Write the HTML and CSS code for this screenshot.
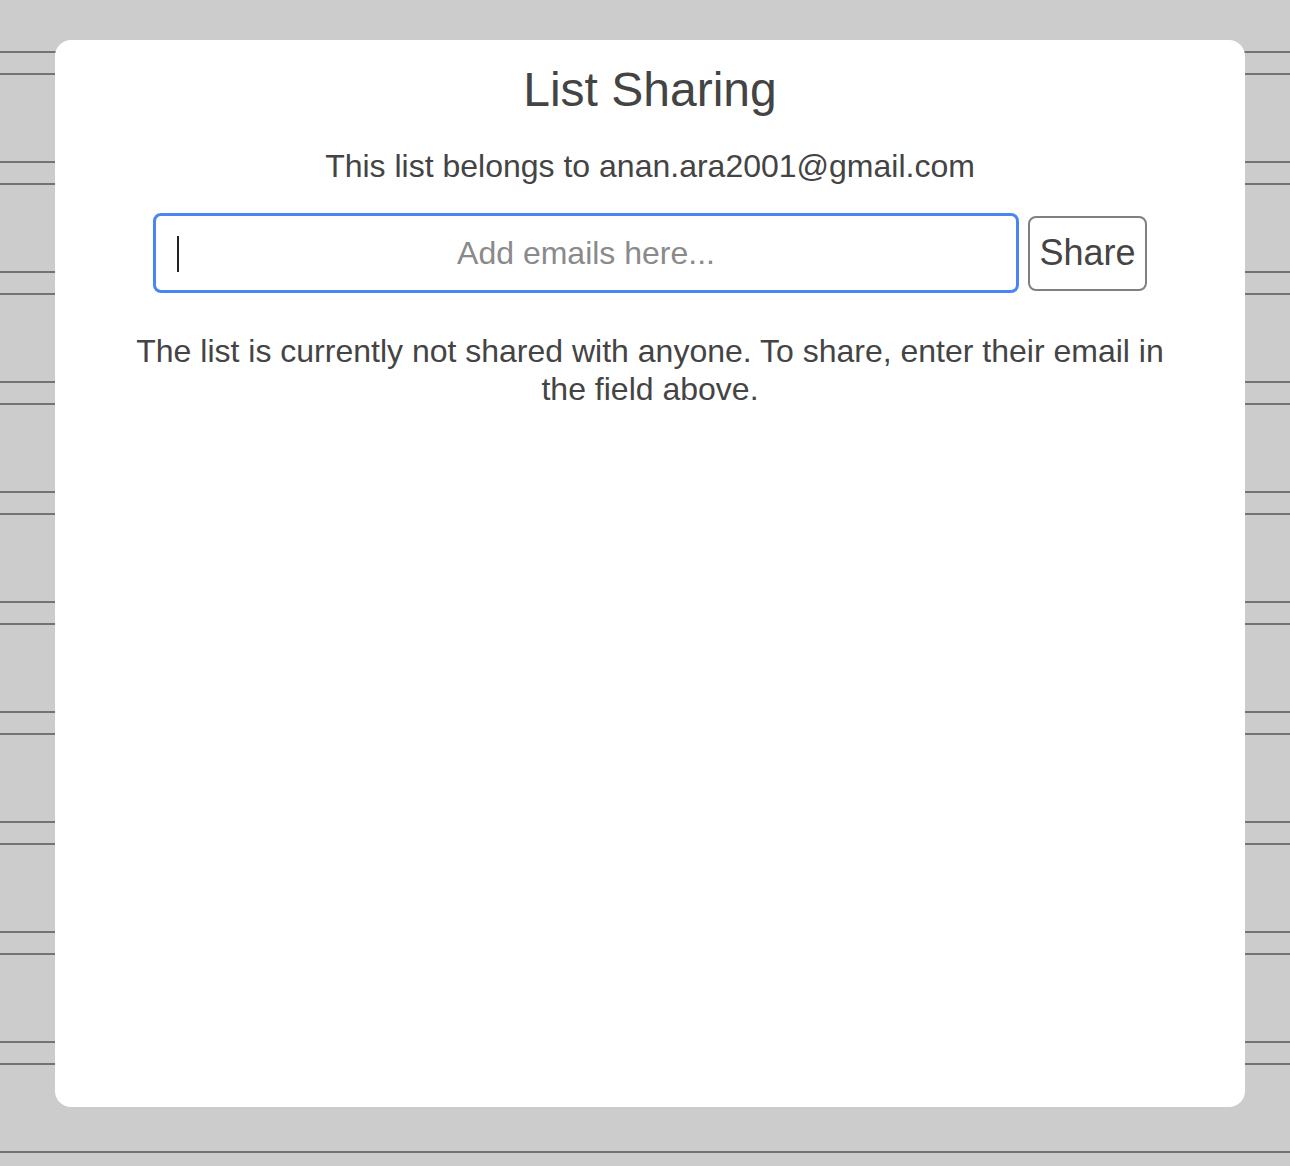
FILE: index.html
```html
<!DOCTYPE html>
<html>
<head>
<meta charset="utf-8">
<title>List Sharing</title>
<link rel="stylesheet" href="styles.css">
</head>
<body>
<div class="card">
  <h1 class="title">List Sharing</h1>
  <p class="owner">This list belongs to anan.ara2001@gmail.com</p>
  <div class="share-row">
    <div class="field">
      <input class="email-input" type="text" placeholder="Add emails here...">
      <span class="caret"></span>
    </div>
    <button class="share-btn">Share</button>
  </div>
  <p class="status">The list is currently not shared with anyone. To share, enter their email in the field above.</p>
</div>
</body>
</html>
```

FILE: styles.css
```css
html, body {
  margin: 0;
  padding: 0;
}
body {
  width: 1290px;
  height: 1166px;
  overflow: hidden;
  background-color: #cccccc;
  background-image: repeating-linear-gradient(
    to bottom,
    transparent 0px,
    transparent 51px,
    #737373 51px,
    #737373 53px,
    transparent 53px,
    transparent 73px,
    #737373 73px,
    #737373 75px,
    transparent 75px,
    transparent 110px
  );
  font-family: "Liberation Sans", Arial, Helvetica, sans-serif;
  color: #444444;
  padding-top: 40px;
  box-sizing: border-box;
}
.card {
  margin-left: 55px;
  width: 1190px;
  height: 1067px;
  background: #ffffff;
  border-radius: 16px;
  box-sizing: border-box;
  padding: 22px 70px 0;
  display: flex;
  flex-direction: column;
  align-items: center;
}
.title {
  margin: 0;
  font-size: 48px;
  font-weight: normal;
  line-height: 56px;
  color: #444444;
}
.owner {
  margin: 29px 0 0;
  font-size: 32px;
  line-height: 38px;
}
.share-row {
  margin-top: 28px;
  display: flex;
  align-items: center;
  gap: 9px;
}
.field {
  position: relative;
}
.email-input {
  display: block;
  width: 866px;
  height: 80px;
  box-sizing: border-box;
  border: 3px solid #4a86f2;
  border-radius: 8px;
  outline: none;
  font-family: inherit;
  font-size: 32px;
  text-align: center;
  color: #444444;
  padding: 0 12px;
  background: #ffffff;
}
.email-input::placeholder {
  color: #8a8a8a;
}
.caret {
  position: absolute;
  left: 24px;
  top: 23px;
  width: 2px;
  height: 36px;
  background: #222222;
}
.share-btn {
  width: 119px;
  height: 75px;
  box-sizing: border-box;
  border: 2px solid #808080;
  border-radius: 8px;
  background: #ffffff;
  font-family: inherit;
  font-size: 36px;
  color: #444444;
  padding: 0;
}
.status {
  margin: 39px 0 0;
  font-size: 32px;
  line-height: 38px;
  text-align: center;
}
```
